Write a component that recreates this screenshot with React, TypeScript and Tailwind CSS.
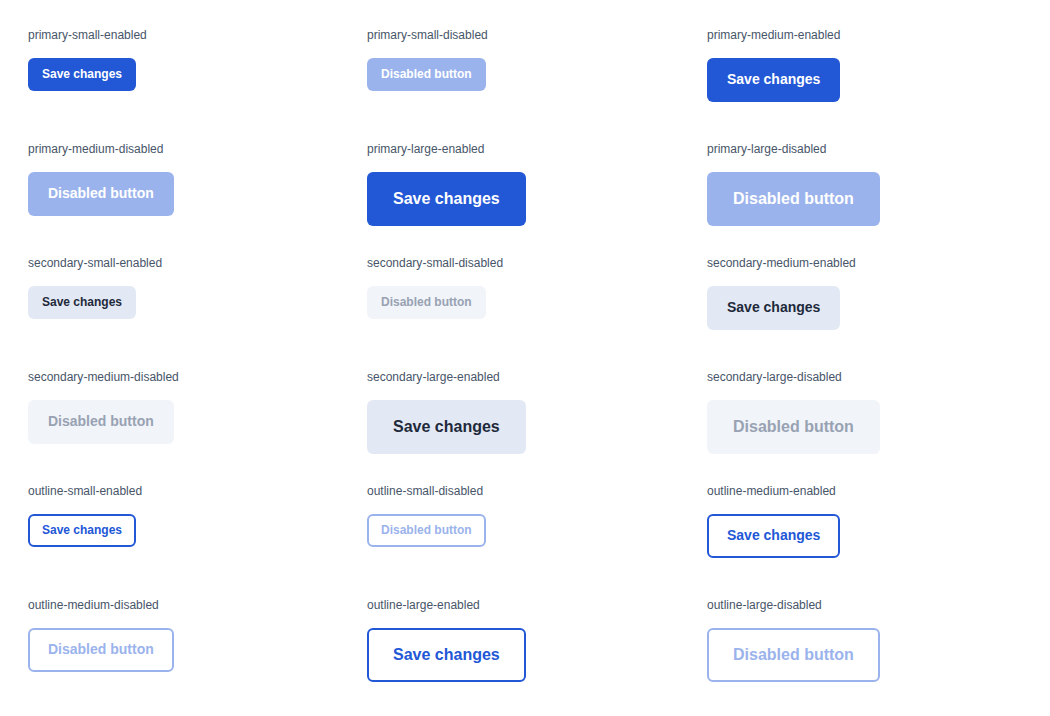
import React from "react";

type Variant = "primary" | "secondary" | "outline";
type Size = "small" | "medium" | "large";

// border-2 is on every button so outline ones keep the same outer size
const sizeClass: Record<Size, string> = {
  small: "h-[33px] px-[12px] pb-px text-[12px] rounded-[6px]",
  medium: "h-[44px] px-[18px] pb-[3px] text-[14px] rounded-[6px]",
  large: "h-[54px] px-[24px] pb-px text-[16px] rounded-[6px]",
};

const variantClass: Record<Variant, { on: string; off: string }> = {
  primary: {
    on: "bg-[#2257d6] text-white border-transparent",
    off: "bg-[#9bb3ec] text-white border-transparent",
  },
  secondary: {
    on: "bg-[#e3e9f4] text-[#1e293b] border-transparent",
    off: "bg-[#f1f4f9] text-[#98a2b3] border-transparent",
  },
  outline: {
    on: "bg-white text-[#2257d6] border-[#2257d6]",
    off: "bg-white text-[#9bb3ec] border-[#9bb3ec]",
  },
};

const cells: { variant: Variant; size: Size; disabled: boolean }[] = [];
(["primary", "secondary", "outline"] as Variant[]).forEach((variant) => {
  (["small", "medium", "large"] as Size[]).forEach((size) => {
    cells.push({ variant, size, disabled: false });
    cells.push({ variant, size, disabled: true });
  });
});

const App = () => {
  return (
    <div
      className="min-h-screen bg-white pt-[27px] px-[28px]"
      style={{ fontFamily: '"Liberation Sans", Arial, sans-serif' }}
    >
      <div className="grid grid-cols-[339px_340px_340px] auto-rows-[114px]">
        {cells.map(({ variant, size, disabled }) => {
          const v = variantClass[variant];
          return (
            <div key={`${variant}-${size}-${disabled}`} className="flex flex-col items-start">
              <span className="text-[12px] leading-[16px] text-[#475569]">
                {variant}-{size}-{disabled ? "disabled" : "enabled"}
              </span>
              <button
                disabled={disabled}
                className={`mt-[15px] flex items-center justify-center border-2 font-bold leading-none whitespace-nowrap ${sizeClass[size]} ${
                  disabled ? v.off : v.on
                }`}
              >
                {disabled ? "Disabled button" : "Save changes"}
              </button>
            </div>
          );
        })}
      </div>
    </div>
  );
};

export default App;
